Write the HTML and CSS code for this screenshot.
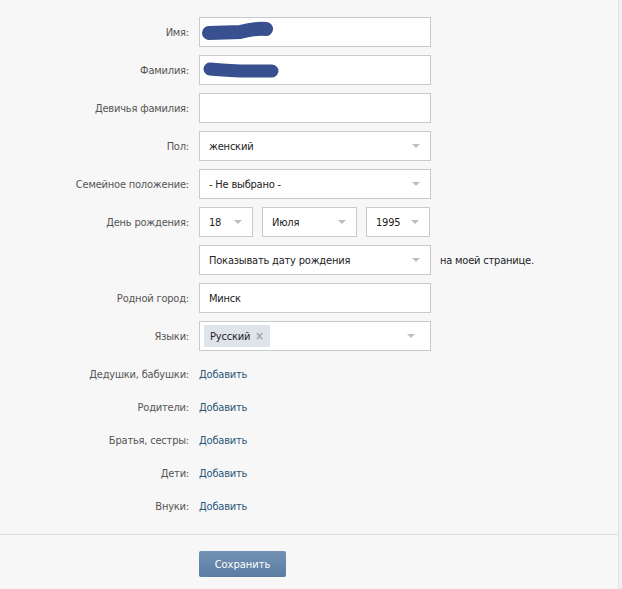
FILE: index.html
```html
<!DOCTYPE html>
<html lang="ru">
<head>
<meta charset="utf-8">
<title>Редактирование профиля</title>
<link rel="stylesheet" href="styles.css">
</head>
<body>
<div class="panel">
  <div class="form">
    <div class="row">
      <div class="label">Имя:</div>
      <div class="field"><div class="input"><svg class="blob" width="90" height="28" viewBox="0 0 90 28"><path d="M9 15 L40 14 Q56 10 66 11" stroke="#38508f" stroke-width="14" fill="none" stroke-linecap="round"/></svg></div></div>
    </div>
    <div class="row">
      <div class="label">Фамилия:</div>
      <div class="field"><div class="input"><svg class="blob" width="90" height="28" viewBox="0 0 90 28"><path d="M10 13 Q20 14 40 15 L72 15" stroke="#38508f" stroke-width="13" fill="none" stroke-linecap="round"/></svg></div></div>
    </div>
    <div class="row">
      <div class="label">Девичья фамилия:</div>
      <div class="field"><div class="input"></div></div>
    </div>
    <div class="row">
      <div class="label">Пол:</div>
      <div class="field"><div class="input select"><span>женский</span><i class="arrow"></i></div></div>
    </div>
    <div class="row">
      <div class="label">Семейное положение:</div>
      <div class="field"><div class="input select"><span>- Не выбрано -</span><i class="arrow"></i></div></div>
    </div>
    <div class="row">
      <div class="label">День рождения:</div>
      <div class="field date">
        <div class="input select day"><span>18</span><i class="arrow"></i></div>
        <div class="input select month"><span>Июля</span><i class="arrow"></i></div>
        <div class="input select year"><span>1995</span><i class="arrow"></i></div>
      </div>
    </div>
    <div class="row">
      <div class="label"></div>
      <div class="field show">
        <div class="input select"><span>Показывать дату рождения</span><i class="arrow"></i></div>
        <span class="note">на моей странице.</span>
      </div>
    </div>
    <div class="row">
      <div class="label">Родной город:</div>
      <div class="field"><div class="input"><span>Минск</span></div></div>
    </div>
    <div class="row">
      <div class="label">Языки:</div>
      <div class="field"><div class="input select tags"><span class="token">Русский <b class="x">×</b></span><i class="arrow"></i></div></div>
    </div>
    <div class="relatives">
      <div class="rel">
        <div class="label">Дедушки, бабушки:</div>
        <a class="link" href="#">Добавить</a>
      </div>
      <div class="rel">
        <div class="label">Родители:</div>
        <a class="link" href="#">Добавить</a>
      </div>
      <div class="rel">
        <div class="label">Братья, сестры:</div>
        <a class="link" href="#">Добавить</a>
      </div>
      <div class="rel">
        <div class="label">Дети:</div>
        <a class="link" href="#">Добавить</a>
      </div>
      <div class="rel">
        <div class="label">Внуки:</div>
        <a class="link" href="#">Добавить</a>
      </div>
    </div>
  </div>
  <div class="footer">
    <button class="save">Сохранить</button>
  </div>
</div>
</body>
</html>
```
FILE: styles.css
```css
html {
  background: #edf1f5;
}
body {
  margin: 0;
  font-family: "DejaVu Sans Condensed", "DejaVu Sans", sans-serif;
  font-size: 11px;
  letter-spacing: -0.2px;
  color: #000;
}
.panel {
  width: 619px;
  height: 589px;
  background: #f7f7f7;
  border-right: 1px solid #dde3ea;
  box-sizing: border-box;
}
.form {
  padding: 17px 0 11px;
  border-bottom: 1px solid #dcdde0;
}
.row {
  display: grid;
  grid-template-columns: 189px 1fr;
  column-gap: 10px;
  align-items: center;
  margin-bottom: 8px;
  height: 30px;
}
.label {
  text-align: right;
  color: #555;
}
.field {
  display: flex;
  align-items: center;
}
.input {
  width: 232px;
  height: 30px;
  box-sizing: border-box;
  border: 1px solid #c7cacf;
  background: #fff;
  display: flex;
  align-items: center;
  padding: 0 9px;
  position: relative;
  color: #222;
}
.blob {
  position: absolute;
  left: 0;
  top: 0;
}
.select {
  justify-content: space-between;
}
.arrow {
  width: 0;
  height: 0;
  border-left: 4px solid transparent;
  border-right: 4px solid transparent;
  border-top: 4px solid #b8bfc7;
  margin-right: 1px;
}
.date {
  gap: 9px;
}
.day { width: 54px; }
.month { width: 95px; }
.year { width: 64px; }
.show {
  gap: 9px;
}
.note {
  color: #222;
}
.tags {
  padding-left: 4px;
}
.token {
  background: #dfe4ea;
  height: 22px;
  line-height: 22px;
  padding: 0 6px;
  color: #222;
  border-radius: 1px;
}
.x {
  color: #9aa5b1;
  font-weight: bold;
  font-size: 12px;
  margin-left: 2px;
}
.tags .arrow {
  margin-right: 6px;
}
.relatives {
  margin-top: -1px;
}
.rel {
  display: grid;
  grid-template-columns: 189px 1fr;
  column-gap: 10px;
  align-items: center;
  height: 33px;
}
.link {
  color: #2b587a;
  text-decoration: none;
}
.footer {
  padding: 16px 0 0 199px;
}
.save {
  width: 87px;
  height: 26px;
  border: 0;
  border-radius: 2px;
  background: linear-gradient(#7392b5, #5a7ca3);
  color: #fff;
  font-family: "DejaVu Sans Condensed", "DejaVu Sans", sans-serif;
  font-size: 11px;
  padding: 0;
}
```
